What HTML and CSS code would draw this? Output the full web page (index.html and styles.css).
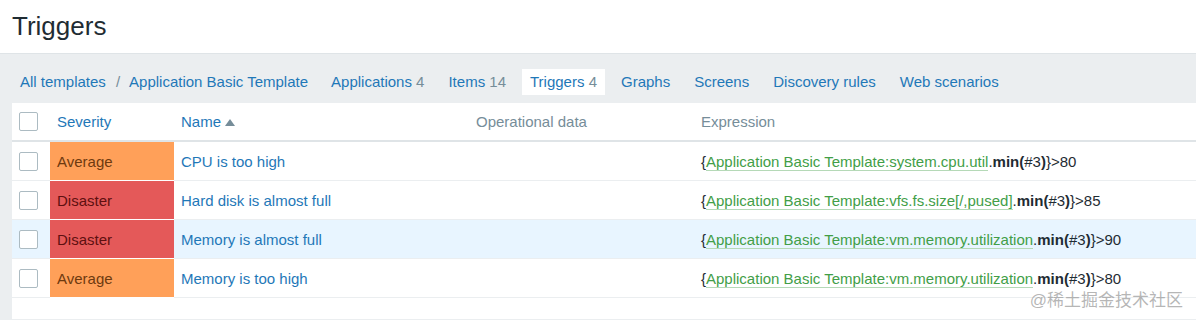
FILE: index.html
```html
<!DOCTYPE html>
<html>
<head>
    <link rel="stylesheet" href="styles.css">
</head>
<body>
<div class="header">
    <h1>Triggers</h1>
</div>
<div class="main">
    <ul class="nav">
        <li class="crumb"><a href="#">All templates</a></li>
        <li class="sep">/</li>
        <li class="crumb last"><a href="#">Application Basic Template</a></li>
        <li><a href="#">Applications</a> <span class="count">4</span></li>
        <li><a href="#">Items</a> <span class="count">14</span></li>
        <li class="active"><a href="#">Triggers</a> <span class="count">4</span></li>
        <li><a href="#">Graphs</a></li>
        <li><a href="#">Screens</a></li>
        <li><a href="#">Discovery rules</a></li>
        <li><a href="#">Web scenarios</a></li>
    </ul>
    <div class="panel">
        <table class="list">
            <thead>
                <tr>
                    <th class="col-check"><span class="checkbox"></span></th>
                    <th class="col-sev"><a href="#">Severity</a></th>
                    <th class="col-name"><a href="#">Name</a><span class="arrow"></span></th>
                    <th class="col-op">Operational data</th>
                    <th>Expression</th>
                </tr>
            </thead>
            <tbody>
                <tr>
                    <td><span class="checkbox"></span></td>
                    <td class="average">Average</td>
                    <td><a href="#">CPU is too high</a></td>
                    <td></td>
                    <td>{<a class="item" href="#">Application Basic Template:system.cpu.util</a>.<b>min(</b>#3<b>)</b>}&gt;80</td>
                </tr>
                <tr>
                    <td><span class="checkbox"></span></td>
                    <td class="disaster">Disaster</td>
                    <td><a href="#">Hard disk is almost full</a></td>
                    <td></td>
                    <td>{<a class="item" href="#">Application Basic Template:vfs.fs.size[/,pused]</a>.<b>min(</b>#3<b>)</b>}&gt;85</td>
                </tr>
                <tr class="hover">
                    <td><span class="checkbox"></span></td>
                    <td class="disaster">Disaster</td>
                    <td><a href="#">Memory is almost full</a></td>
                    <td></td>
                    <td>{<a class="item" href="#">Application Basic Template:vm.memory.utilization</a>.<b>min(</b>#3<b>)</b>}&gt;90</td>
                </tr>
                <tr>
                    <td><span class="checkbox"></span></td>
                    <td class="average">Average</td>
                    <td><a href="#">Memory is too high</a></td>
                    <td></td>
                    <td>{<a class="item" href="#">Application Basic Template:vm.memory.utilization</a>.<b>min(</b>#3<b>)</b>}&gt;80</td>
                </tr>
            </tbody>
        </table>
        <div class="watermark">@稀土掘金技术社区</div>
    </div>
</div>
</body>
</html>
```

FILE: styles.css
```css
body {
    margin: 0;
    font-family: "Liberation Sans", Arial, "Noto Sans CJK SC", sans-serif;
    font-size: 15px;
    color: #1f2c33;
    background-color: #ebeef0;
    overflow: hidden;
}

a {
    color: #1f78b8;
    text-decoration: none;
}

.header {
    background-color: #fff;
    height: 54px;
    border-bottom: 1px solid #dfe4e7;
    box-sizing: border-box;
}

.header h1 {
    margin: 0;
    padding: 11px 0 0 12px;
    font-size: 26px;
    font-weight: normal;
    line-height: 30px;
}

.main {
    padding: 15px 0 0 12px;
}

.nav {
    list-style: none;
    margin: 0 0 8px 0;
    padding: 0;
    display: flex;
    align-items: center;
    height: 26px;
}

.nav li {
    padding: 0 8px;
    margin-right: 8px;
    line-height: 26px;
    white-space: nowrap;
}

.nav li.crumb {
    margin-right: 0;
}

.nav li.sep {
    padding: 0 1px 0 2px;
    margin-right: 0;
    color: #768d99;
}

.nav li.last {
    margin-right: 7px;
}

.nav li.active {
    background-color: #fff;
}

.count {
    color: #768d99;
}

.panel {
    background-color: #fff;
    height: 216px;
    position: relative;
}

.list {
    width: 100%;
    border-collapse: collapse;
}

.list th {
    text-align: left;
    font-weight: normal;
    color: #768d99;
    height: 37px;
    padding: 0 7px;
    border-bottom: 2px solid #dfe4e7;
}

.list td {
    height: 38px;
    padding: 0 7px;
    border-bottom: 1px solid #ebeef0;
}

.col-check {
    width: 24px;
}

.col-sev {
    width: 110px;
}

.col-name {
    width: 281px;
}

.col-op {
    width: 211px;
}

.checkbox {
    display: block;
    width: 17px;
    height: 17px;
    border: 1px solid #acbbc2;
    border-radius: 2px;
    background-color: #fff;
}

.arrow {
    display: inline-block;
    margin-left: 4px;
    border-left: 5px solid transparent;
    border-right: 5px solid transparent;
    border-bottom: 7px solid #768d99;
    vertical-align: 1px;
}

.list td.average {
    background-color: #ffa059;
    color: #6e3a10;
    border-bottom-color: #fff;
}

.list td.disaster {
    background-color: #e45959;
    color: #5e1010;
    border-bottom-color: #fff;
}

.hover td {
    background-color: #e8f5ff;
}

.item {
    color: #429e47;
    border-bottom: 1px solid #b5d9b7;
}

.list b {
    font-weight: bold;
}

.watermark {
    position: absolute;
    right: 13px;
    bottom: 8px;
    font-size: 17px;
    color: rgba(150, 150, 150, 0.7);
}
```
